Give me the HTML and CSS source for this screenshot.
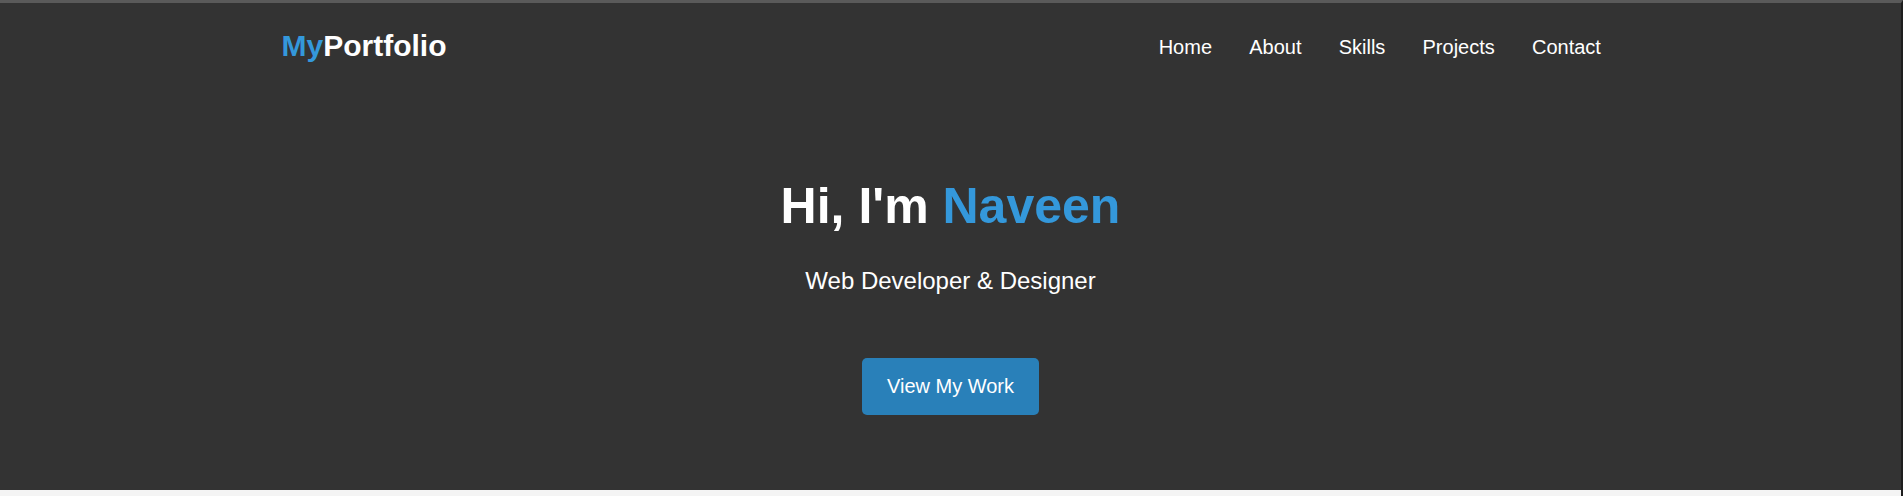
FILE: index.html
```html
<!DOCTYPE html>
<html lang="en">
<head>
<meta charset="utf-8">
<title>MyPortfolio</title>
<link rel="stylesheet" href="styles.css">
</head>
<body>
<div class="window">
  <div class="site">
    <header class="header">
      <div class="container header-row">
        <a class="logo" href="#"><span class="accent">My</span>Portfolio</a>
        <nav class="nav-wrap">
          <ul class="nav">
            <li><a href="#">Home</a></li>
            <li><a href="#">About</a></li>
            <li><a href="#">Skills</a></li>
            <li><a href="#">Projects</a></li>
            <li><a href="#">Contact</a></li>
          </ul>
        </nav>
      </div>
    </header>
    <section class="hero">
      <h1 class="hero-title">Hi, I'm <span class="accent">Naveen</span></h1>
      <p class="hero-sub">Web Developer &amp; Designer</p>
      <a class="btn" href="#">View My Work</a>
    </section>
  </div>
</div>
</body>
</html>
```
FILE: styles.css
```css
* { box-sizing: border-box; }
html, body { margin: 0; padding: 0; }
body {
  background: #f4f4f4;
  font-family: "Liberation Sans", Arial, sans-serif;
  color: #fff;
}
.window {
  min-height: 100vh;
  border-top: 3px solid #5a5a5a;
  border-right: 2px solid #1e1e1e;
}
.site { background: #333333; }
.container {
  width: 1338px;
  margin: 0 auto;
}
.header { padding: 26px 0; }
.header-row {
  display: flex;
  align-items: center;
  justify-content: space-between;
}
.logo {
  font-size: 30px;
  font-weight: bold;
  color: #fff;
  text-decoration: none;
  line-height: 34px;
}
.accent { color: #3498db; }
.nav-wrap { padding-top: 2px; }
.nav {
  list-style: none;
  margin: 0;
  padding: 0;
  display: flex;
}
.nav a {
  display: block;
  padding: 0 18.6px;
  color: #fff;
  text-decoration: none;
  font-size: 20px;
  line-height: 23px;
}
.hero {
  text-align: center;
  padding: 89px 0 75px;
}
.hero-title {
  margin: 0 0 32px;
  font-size: 50px;
  line-height: 57px;
  font-weight: bold;
}
.hero-sub {
  margin: 0 0 63px;
  font-size: 24px;
  line-height: 28px;
}
.btn {
  display: inline-block;
  background: #2980b9;
  color: #fff;
  text-decoration: none;
  font-size: 20px;
  line-height: 23px;
  padding: 17px 25px;
  border-radius: 5px;
}
```
